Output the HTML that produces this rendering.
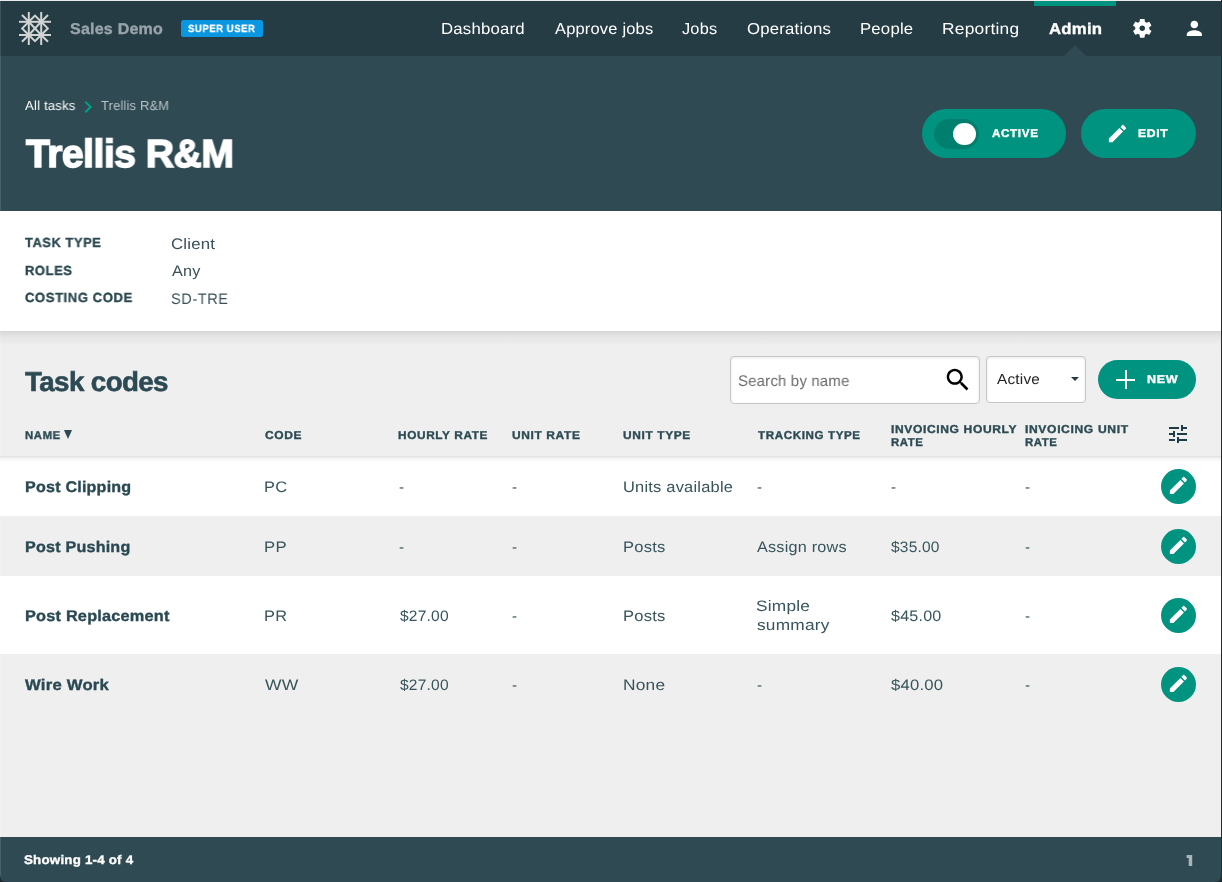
<!DOCTYPE html>
<html><head><meta charset="utf-8">
<style>
html,body{margin:0;padding:0;}
body{width:1222px;height:882px;position:relative;overflow:hidden;background:#1b2a2f;font-family:"Liberation Sans",sans-serif;}
.t{position:absolute;white-space:nowrap;line-height:1;z-index:5;text-rendering:geometricPrecision;will-change:transform}
.pill{position:absolute;background:#009380;border-radius:25px;}
.circ{position:absolute;width:35px;height:35px;border-radius:50%;background:#009380;}
.row{position:absolute;left:0;width:1222px;}
svg{z-index:5}
</style></head><body>
<div style="position:absolute;left:0;top:0;width:1222px;height:1px;background:#ebebeb"></div>
<div style="position:absolute;left:0;top:1px;width:1222px;height:55px;background:#253c44"></div>
<div style="position:absolute;left:0;top:56px;width:1222px;height:155px;background:#2f4a53"></div>
<div style="position:absolute;left:0;top:331px;width:1222px;height:506px;background:#efefef"></div>
<div style="position:absolute;left:0;top:211px;width:1222px;height:120px;background:#fff"></div>
<div style="position:absolute;left:0;top:331px;width:1222px;height:15px;background:linear-gradient(rgba(0,0,0,.115),rgba(0,0,0,.075) 2px,rgba(0,0,0,.035) 7px,rgba(0,0,0,0))"></div>
<div class="row" style="top:456px;height:60px;background:#ffffff"></div>
<div class="row" style="top:516px;height:60px;background:#efefef"></div>
<div class="row" style="top:576px;height:78px;background:#ffffff"></div>
<div class="row" style="top:654px;height:60px;background:#efefef"></div>
<div style="position:absolute;left:0;top:456px;width:1222px;height:6px;background:linear-gradient(rgba(0,0,0,.13),rgba(0,0,0,.05) 2px,rgba(0,0,0,0))"></div>
<div style="position:absolute;left:0;top:837px;width:1221px;height:45px;background:#2f4a53;border-radius:0 0 6px 6px"></div>
<div style="position:absolute;left:1221px;top:0;width:1px;height:882px;background:#2a2a2a;z-index:20"></div>
<div style="position:absolute;left:0;top:0;width:1px;height:876px;background:rgba(255,255,255,.12);z-index:20"></div>
<svg style="position:absolute;left:0;top:0;width:70px;height:56px" viewBox="0 0 70 56">
<g stroke="#d2d3d3" stroke-width="2" fill="none" stroke-linecap="butt">
<line x1="28.8" y1="12" x2="28.8" y2="45"/><line x1="41.2" y1="12" x2="41.2" y2="45"/>
<line x1="19" y1="21.8" x2="51" y2="21.8"/><line x1="19" y1="35" x2="51" y2="35"/>
<line x1="22" y1="15" x2="28.8" y2="21.8"/><line x1="48" y1="15" x2="41.2" y2="21.8"/>
<line x1="22" y1="41.8" x2="28.8" y2="35"/><line x1="48" y1="41.8" x2="41.2" y2="35"/>
<polyline points="28.8,21.8 35,15.6 41.2,21.8"/>
<polyline points="28.8,35 35,41.2 41.2,35"/>
<polyline points="28.8,21.8 22.2,28.4 28.8,35"/>
<polyline points="41.2,21.8 47.8,28.4 41.2,35"/>
<line x1="28.8" y1="21.8" x2="41.2" y2="35"/><line x1="41.2" y1="21.8" x2="28.8" y2="35"/>
</g></svg>
<svg style="position:absolute;left:0;top:0;width:1222px;height:882px;z-index:6" viewBox="0 0 1222 882"><path fill="#a9b5b8" d="M1186.6 854.9h5.6v11.1h-3.5v-8h-2.1z"/></svg>
<div style="position:absolute;left:181.3px;top:20px;width:81.9px;height:17px;background:#0b96e2;border-radius:2.5px"></div>
<div style="position:absolute;left:1034px;top:1px;width:82px;height:5px;background:#009380"></div>
<div style="position:absolute;left:1064px;top:45px;width:0;height:0;border-left:11px solid transparent;border-right:11px solid transparent;border-bottom:11px solid #2f4a53"></div>
<svg style="position:absolute;left:1130.8px;top:17.2px;width:22.5px;height:22.5px" viewBox="0 0 24 24"><path fill="#ffffff" d="M19.43 12.98c.04-.32.07-.64.07-.98s-.03-.66-.07-.98l2.11-1.65c.19-.15.24-.42.12-.64l-2-3.46c-.12-.22-.39-.3-.61-.22l-2.49 1c-.52-.4-1.08-.73-1.69-.98l-.38-2.65C14.46 2.18 14.25 2 14 2h-4c-.25 0-.46.18-.49.42l-.38 2.650c-.61.25-1.17.59-1.69.98l-2.49-1c-.23-.09-.49 0-.61.22l-2 3.46c-.13.22-.07.49.12.64l2.11 1.65c-.04.32-.07.65-.07.98s.03.66.07.98l-2.11 1.65c-.19.15-.24.42-.12.64l2 3.46c.12.22.39.3.61.22l2.49-1c.52.4 1.08.73 1.69.98l.38 2.65c.03.24.24.42.49.42h4c.25 0 .46-.18.49-.42l.38-2.65c.61-.25 1.17-.59 1.69-.98l2.49 1c.23.09.49 0 .61-.22l2-3.46c.12-.22.07-.49-.12-.64l-2.11-1.65zM12 15c-1.66 0-3-1.34-3-3s1.34-3 3-3 3 1.34 3 3-1.34 3-3 3z"/></svg>
<svg style="position:absolute;left:1183.25px;top:17.3px;width:22.7px;height:22.7px" viewBox="0 0 24 24"><path fill="#ffffff" d="M12 12c2.21 0 4-1.79 4-4s-1.79-4-4-4-4 1.79-4 4 1.79 4 4 4zm0 2c-2.67 0-8 1.34-8 4v2h16v-2c0-2.66-5.33-4-8-4z"/></svg>
<svg style="position:absolute;left:76.4px;top:94.5px;width:24px;height:24px" viewBox="0 0 24 24"><path fill="#00a08a" d="M10 6L8.59 7.41 13.17 12l-4.58 4.59L10 18l6-6z"/></svg>
<div class="pill" style="left:922px;top:109px;width:144px;height:49px"></div>
<div style="position:absolute;left:934px;top:119px;width:45px;height:30px;border-radius:15px;background:#007f6e"></div>
<div style="position:absolute;left:953px;top:122.8px;width:22.5px;height:22.5px;border-radius:50%;background:#fff"></div>
<div class="pill" style="left:1081px;top:109px;width:115px;height:49px"></div>
<svg style="position:absolute;left:1106px;top:121.5px;width:23px;height:23px" viewBox="0 0 24 24"><path fill="#ffffff" d="M3 17.25V21h3.75L17.81 9.94l-3.75-3.75L3 17.25zM20.71 7.04c.39-.39.39-1.02 0-1.41l-2.34-2.34c-.39-.39-1.02-.39-1.41 0l-1.83 1.83 3.75 3.75 1.83-1.83z"/></svg>
<div style="position:absolute;left:730px;top:356px;width:248px;height:46px;border:1px solid #c6c6c6;border-radius:4px;background:#fff;box-shadow:inset 0 1px 3px rgba(0,0,0,.09);z-index:3"></div>
<div style="position:absolute;left:986px;top:356px;width:98px;height:45px;border:1px solid #c6c6c6;border-radius:4px;background:#fff;box-shadow:inset 0 1px 3px rgba(0,0,0,.09);z-index:3"></div>
<svg style="position:absolute;left:943.4px;top:365.2px;width:29.76px;height:29.76px;z-index:4" viewBox="0 0 24 24"><path fill="#000" d="M15.5 14h-.79l-.28-.27C15.41 12.59 16 11.110 16 9.5 16 5.91 13.09 3 9.5 3S3 5.91 3 9.5 5.91 16 9.5 16c1.61 0 3.09-.59 4.23-1.57l.27.28v.79l5 4.99L20.49 19l-4.99-5zm-6 0C7.01 14 5 11.99 5 9.5S7.01 5 9.5 5 14 7.01 14 9.5 11.99 14 9.5 14z"/></svg>
<div style="position:absolute;left:1070.6px;top:377px;width:0;height:0;border-left:4.25px solid transparent;border-right:4.25px solid transparent;border-top:4.5px solid #243d45;z-index:4"></div>
<div class="pill" style="left:1098px;top:360px;width:98px;height:39px;border-radius:20px"></div>
<div style="position:absolute;left:1116px;top:378.5px;width:19px;height:2px;background:#fff"></div>
<div style="position:absolute;left:1124.5px;top:370px;width:2px;height:19px;background:#fff"></div>
<div style="position:absolute;left:64.2px;top:429.8px;width:0;height:0;border-left:4.7px solid transparent;border-right:4.7px solid transparent;border-top:9px solid #2c4a53"></div>
<svg style="position:absolute;left:1166px;top:422px;width:24px;height:24px" viewBox="0 0 24 24"><path fill="#1f3d47" d="M3 17v2h6v-2H3zM3 5v2h10V5H3zm10 16v-2h8v-2h-8v-2h-2v6h2zM7 9v2H3v2h4v2h2V9H7zm14 4v-2H11v2h10zm-6-4h2V7h4V5h-4V3h-2v6z"/></svg>
<div class="circ" style="left:1161px;top:469.0px"></div>
<svg style="position:absolute;left:1167.1px;top:474.1px;width:22.8px;height:22.8px" viewBox="0 0 24 24"><path fill="#ffffff" d="M3 17.25V21h3.75L17.81 9.94l-3.75-3.75L3 17.25zM20.71 7.04c.39-.39.39-1.02 0-1.41l-2.34-2.34c-.39-.39-1.02-.39-1.41 0l-1.83 1.83 3.75 3.75 1.83-1.83z"/></svg>
<div class="circ" style="left:1161px;top:529.0px"></div>
<svg style="position:absolute;left:1167.1px;top:534.1px;width:22.8px;height:22.8px" viewBox="0 0 24 24"><path fill="#ffffff" d="M3 17.25V21h3.75L17.81 9.94l-3.75-3.75L3 17.25zM20.71 7.04c.39-.39.39-1.02 0-1.41l-2.34-2.34c-.39-.39-1.02-.39-1.41 0l-1.83 1.83 3.75 3.75 1.83-1.83z"/></svg>
<div class="circ" style="left:1161px;top:598.0px"></div>
<svg style="position:absolute;left:1167.1px;top:603.1px;width:22.8px;height:22.8px" viewBox="0 0 24 24"><path fill="#ffffff" d="M3 17.25V21h3.75L17.81 9.94l-3.75-3.75L3 17.25zM20.71 7.04c.39-.39.39-1.02 0-1.41l-2.34-2.34c-.39-.39-1.02-.39-1.41 0l-1.83 1.83 3.75 3.75 1.83-1.83z"/></svg>
<div class="circ" style="left:1161px;top:667.0px"></div>
<svg style="position:absolute;left:1167.1px;top:672.1px;width:22.8px;height:22.8px" viewBox="0 0 24 24"><path fill="#ffffff" d="M3 17.25V21h3.75L17.81 9.94l-3.75-3.75L3 17.25zM20.71 7.04c.39-.39.39-1.02 0-1.41l-2.34-2.34c-.39-.39-1.02-.39-1.41 0l-1.83 1.83 3.75 3.75 1.83-1.83z"/></svg>
<div class="t" id="sales" style="left:70.01px;top:22.01px;font-size:15.64px;font-weight:700;letter-spacing:0.2px;color:#98a4a9;-webkit-text-stroke:0.35px #98a4a9;transform:scaleX(1.0278);transform-origin:0 0;">Sales Demo</div>
<div class="t" id="badge" style="left:188.39px;top:25.00px;font-size:10.41px;font-weight:700;letter-spacing:0.6px;color:#ffffff;-webkit-text-stroke:0.25px #fff;transform:scaleX(0.9162);transform-origin:0 0;">SUPER USER</div>
<div class="t" id="n1" style="left:440.87px;top:22.00px;font-size:15.83px;font-weight:400;letter-spacing:0.2px;color:#ffffff;transform:scaleX(1.0588);transform-origin:0 0;">Dashboard</div>
<div class="t" id="n2" style="left:555.01px;top:22.00px;font-size:15.83px;font-weight:400;letter-spacing:0.2px;color:#ffffff;transform:scaleX(1.0377);transform-origin:0 0;">Approve jobs</div>
<div class="t" id="n3" style="left:681.76px;top:22.00px;font-size:15.83px;font-weight:400;letter-spacing:0.2px;color:#ffffff;transform:scaleX(1.0301);transform-origin:0 0;">Jobs</div>
<div class="t" id="n4" style="left:746.71px;top:22.00px;font-size:15.83px;font-weight:400;letter-spacing:0.2px;color:#ffffff;transform:scaleX(1.0584);transform-origin:0 0;">Operations</div>
<div class="t" id="n5" style="left:859.55px;top:22.00px;font-size:15.83px;font-weight:400;letter-spacing:0.2px;color:#ffffff;transform:scaleX(1.0564);transform-origin:0 0;">People</div>
<div class="t" id="n6" style="left:941.63px;top:22.00px;font-size:15.83px;font-weight:400;letter-spacing:0.2px;color:#ffffff;transform:scaleX(1.0970);transform-origin:0 0;">Reporting</div>
<div class="t" id="n7" style="left:1048.56px;top:22.01px;font-size:15.68px;font-weight:700;letter-spacing:0.2px;color:#ffffff;-webkit-text-stroke:0.35px #ffffff;transform:scaleX(1.0703);transform-origin:0 0;">Admin</div>
<div class="t" id="bc1" style="left:25.16px;top:98.91px;font-size:13.23px;font-weight:400;letter-spacing:0.2px;color:#ffffff;transform:scaleX(0.9886);transform-origin:0 0;">All tasks</div>
<div class="t" id="bc2" style="left:100.70px;top:98.91px;font-size:13.23px;font-weight:400;letter-spacing:0.2px;color:#b9c3c6;transform:scaleX(0.9745);transform-origin:0 0;">Trellis R&amp;M</div>
<div class="t" id="title" style="left:26.16px;top:135.01px;font-size:39.22px;font-weight:700;letter-spacing:-0.5px;color:#ffffff;-webkit-text-stroke:1.5px #fff;transform:scaleX(0.9964);transform-origin:0 0;">Trellis R&amp;M</div>
<div class="t" id="act" style="left:991.93px;top:128.90px;font-size:11.32px;font-weight:700;letter-spacing:0.6px;color:#ffffff;-webkit-text-stroke:0.35px #ffffff;transform:scaleX(1.0322);transform-origin:0 0;">ACTIVE</div>
<div class="t" id="edit" style="left:1138.06px;top:128.90px;font-size:11.32px;font-weight:700;letter-spacing:0.6px;color:#ffffff;-webkit-text-stroke:0.35px #ffffff;transform:scaleX(1.0765);transform-origin:0 0;">EDIT</div>
<div class="t" id="l1" style="left:25.05px;top:236.40px;font-size:13.19px;font-weight:700;letter-spacing:0.6px;color:#2b4850;-webkit-text-stroke:0.35px #2b4850;transform:scaleX(0.9742);transform-origin:0 0;">TASK TYPE</div>
<div class="t" id="l2" style="left:24.70px;top:264.40px;font-size:13.19px;font-weight:700;letter-spacing:0.6px;color:#2b4850;-webkit-text-stroke:0.35px #2b4850;transform:scaleX(0.9813);transform-origin:0 0;">ROLES</div>
<div class="t" id="l3" style="left:25.47px;top:291.40px;font-size:13.19px;font-weight:700;letter-spacing:0.6px;color:#2b4850;-webkit-text-stroke:0.35px #2b4850;transform:scaleX(0.9882);transform-origin:0 0;">COSTING CODE</div>
<div class="t" id="v1" style="left:171.19px;top:237.00px;font-size:15.25px;font-weight:400;letter-spacing:0.2px;color:#3a5058;transform:scaleX(1.0994);transform-origin:0 0;">Client</div>
<div class="t" id="v2" style="left:171.53px;top:264.00px;font-size:15.25px;font-weight:400;letter-spacing:0.2px;color:#3a5058;transform:scaleX(1.0632);transform-origin:0 0;">Any</div>
<div class="t" id="v3" style="left:170.82px;top:292.00px;font-size:15.25px;font-weight:400;letter-spacing:0.6px;color:#3a5058;transform:scaleX(0.9535);transform-origin:0 0;">SD-TRE</div>
<div class="t" id="tc" style="left:25.35px;top:368.01px;font-size:27.38px;font-weight:700;letter-spacing:-0.6px;color:#2d4a54;-webkit-text-stroke:0.6px #2d4a54;transform:scaleX(1.0130);transform-origin:0 0;">Task codes</div>
<div class="t" id="srch" style="left:737.86px;top:373.61px;font-size:15.44px;font-weight:400;letter-spacing:0.2px;color:#6b6b6b;transform:scaleX(0.9680);transform-origin:0 0;">Search by name</div>
<div class="t" id="sel" style="left:996.53px;top:373.21px;font-size:14.54px;font-weight:400;letter-spacing:0.2px;color:#222222;transform:scaleX(1.0570);transform-origin:0 0;">Active</div>
<div class="t" id="new" style="left:1147.01px;top:374.90px;font-size:11.32px;font-weight:700;letter-spacing:0.6px;color:#ffffff;-webkit-text-stroke:0.35px #ffffff;transform:scaleX(1.1095);transform-origin:0 0;">NEW</div>
<div class="t" id="h1" style="left:24.99px;top:431.00px;font-size:11.4px;font-weight:700;letter-spacing:0.6px;color:#2c4a53;-webkit-text-stroke:0.35px #2c4a53;transform:scaleX(0.9932);transform-origin:0 0;">NAME</div>
<div class="t" id="h2" style="left:265.17px;top:431.00px;font-size:11.4px;font-weight:700;letter-spacing:0.6px;color:#2c4a53;-webkit-text-stroke:0.35px #2c4a53;transform:scaleX(1.0533);transform-origin:0 0;">CODE</div>
<div class="t" id="h3" style="left:398.46px;top:431.00px;font-size:11.4px;font-weight:700;letter-spacing:0.6px;color:#2c4a53;-webkit-text-stroke:0.35px #2c4a53;transform:scaleX(1.0387);transform-origin:0 0;">HOURLY RATE</div>
<div class="t" id="h4" style="left:511.62px;top:431.00px;font-size:11.4px;font-weight:700;letter-spacing:0.6px;color:#2c4a53;-webkit-text-stroke:0.35px #2c4a53;transform:scaleX(1.0488);transform-origin:0 0;">UNIT RATE</div>
<div class="t" id="h5" style="left:623.32px;top:431.00px;font-size:11.4px;font-weight:700;letter-spacing:0.6px;color:#2c4a53;-webkit-text-stroke:0.35px #2c4a53;transform:scaleX(1.0469);transform-origin:0 0;">UNIT TYPE</div>
<div class="t" id="h6" style="left:757.51px;top:431.00px;font-size:11.4px;font-weight:700;letter-spacing:0.6px;color:#2c4a53;-webkit-text-stroke:0.35px #2c4a53;transform:scaleX(1.0186);transform-origin:0 0;">TRACKING TYPE</div>
<div class="t" id="h7" style="left:891.14px;top:425.10px;font-size:11.4px;font-weight:700;letter-spacing:0.6px;color:#2c4a53;-webkit-text-stroke:0.35px #2c4a53;transform:scaleX(1.0572);transform-origin:0 0;">INVOICING HOURLY</div>
<div class="t" id="h7b" style="left:891.00px;top:437.90px;font-size:11.4px;font-weight:700;letter-spacing:0.6px;color:#2c4a53;-webkit-text-stroke:0.35px #2c4a53;">RATE</div>
<div class="t" id="h8" style="left:1025.15px;top:425.10px;font-size:11.4px;font-weight:700;letter-spacing:0.6px;color:#2c4a53;-webkit-text-stroke:0.35px #2c4a53;transform:scaleX(1.0621);transform-origin:0 0;">INVOICING UNIT</div>
<div class="t" id="h8b" style="left:1025.00px;top:437.90px;font-size:11.4px;font-weight:700;letter-spacing:0.6px;color:#2c4a53;-webkit-text-stroke:0.35px #2c4a53;">RATE</div>
<div class="t" id="r0c0" style="left:24.63px;top:480.00px;font-size:15.44px;font-weight:700;letter-spacing:0.2px;color:#2a4952;-webkit-text-stroke:0.35px #2a4952;transform:scaleX(1.0424);transform-origin:0 0;">Post Clipping</div>
<div class="t" id="r0c1" style="left:264.35px;top:480.01px;font-size:15.2px;font-weight:400;letter-spacing:0.2px;color:#38545c;transform:scaleX(1.0806);transform-origin:0 0;">PC</div>
<div class="t" id="r0c2" style="left:398.93px;top:480.01px;font-size:15.2px;font-weight:400;letter-spacing:0.2px;color:#38545c;">-</div>
<div class="t" id="r0c3" style="left:511.93px;top:480.01px;font-size:15.2px;font-weight:400;letter-spacing:0.2px;color:#38545c;">-</div>
<div class="t" id="r0c4" style="left:622.73px;top:480.01px;font-size:15.2px;font-weight:400;letter-spacing:0.2px;color:#38545c;transform:scaleX(1.0825);transform-origin:0 0;">Units available</div>
<div class="t" id="r0c5" style="left:757.09px;top:480.01px;font-size:15.2px;font-weight:400;letter-spacing:0.2px;color:#38545c;">-</div>
<div class="t" id="r0c6" style="left:890.93px;top:480.01px;font-size:15.2px;font-weight:400;letter-spacing:0.2px;color:#38545c;">-</div>
<div class="t" id="r0c7" style="left:1024.80px;top:480.01px;font-size:15.2px;font-weight:400;letter-spacing:0.2px;color:#38545c;">-</div>
<div class="t" id="r1c0" style="left:24.61px;top:540.00px;font-size:15.44px;font-weight:700;letter-spacing:0.2px;color:#2a4952;-webkit-text-stroke:0.35px #2a4952;transform:scaleX(1.0440);transform-origin:0 0;">Post Pushing</div>
<div class="t" id="r1c1" style="left:263.94px;top:540.01px;font-size:15.2px;font-weight:400;letter-spacing:0.2px;color:#38545c;transform:scaleX(1.1021);transform-origin:0 0;">PP</div>
<div class="t" id="r1c2" style="left:399.11px;top:540.01px;font-size:15.2px;font-weight:400;letter-spacing:0.2px;color:#38545c;">-</div>
<div class="t" id="r1c3" style="left:512.11px;top:540.01px;font-size:15.2px;font-weight:400;letter-spacing:0.2px;color:#38545c;">-</div>
<div class="t" id="r1c4" style="left:623.09px;top:540.01px;font-size:15.2px;font-weight:400;letter-spacing:0.2px;color:#38545c;transform:scaleX(1.0913);transform-origin:0 0;">Posts</div>
<div class="t" id="r1c5" style="left:757.12px;top:540.01px;font-size:15.2px;font-weight:400;letter-spacing:0.2px;color:#38545c;transform:scaleX(1.0674);transform-origin:0 0;">Assign rows</div>
<div class="t" id="r1c6" style="left:890.79px;top:540.01px;font-size:15.2px;font-weight:400;letter-spacing:0.2px;color:#38545c;transform:scaleX(1.0220);transform-origin:0 0;">$35.00</div>
<div class="t" id="r1c7" style="left:1024.81px;top:540.01px;font-size:15.2px;font-weight:400;letter-spacing:0.2px;color:#38545c;">-</div>
<div class="t" id="r2c0" style="left:24.50px;top:608.90px;font-size:15.44px;font-weight:700;letter-spacing:0.2px;color:#2a4952;-webkit-text-stroke:0.35px #2a4952;transform:scaleX(1.0553);transform-origin:0 0;">Post Replacement</div>
<div class="t" id="r2c1" style="left:264.15px;top:608.90px;font-size:15.2px;font-weight:400;letter-spacing:0.2px;color:#38545c;transform:scaleX(1.0805);transform-origin:0 0;">PR</div>
<div class="t" id="r2c2" style="left:399.55px;top:608.90px;font-size:15.2px;font-weight:400;letter-spacing:0.2px;color:#38545c;transform:scaleX(1.0250);transform-origin:0 0;">$27.00</div>
<div class="t" id="r2c3" style="left:511.93px;top:608.90px;font-size:15.2px;font-weight:400;letter-spacing:0.2px;color:#38545c;">-</div>
<div class="t" id="r2c4" style="left:623.14px;top:608.90px;font-size:15.2px;font-weight:400;letter-spacing:0.2px;color:#38545c;transform:scaleX(1.0908);transform-origin:0 0;">Posts</div>
<div class="t" id="r2c6" style="left:891.39px;top:608.90px;font-size:15.2px;font-weight:400;letter-spacing:0.2px;color:#38545c;transform:scaleX(1.0589);transform-origin:0 0;">$45.00</div>
<div class="t" id="r2c7" style="left:1024.80px;top:608.90px;font-size:15.2px;font-weight:400;letter-spacing:0.2px;color:#38545c;">-</div>
<div class="t" id="r3c0" style="left:25.45px;top:678.00px;font-size:15.44px;font-weight:700;letter-spacing:0.2px;color:#2a4952;-webkit-text-stroke:0.35px #2a4952;transform:scaleX(1.0812);transform-origin:0 0;">Wire Work</div>
<div class="t" id="r3c1" style="left:265.03px;top:678.01px;font-size:15.2px;font-weight:400;letter-spacing:0.2px;color:#38545c;transform:scaleX(1.1539);transform-origin:0 0;">WW</div>
<div class="t" id="r3c2" style="left:399.55px;top:678.01px;font-size:15.2px;font-weight:400;letter-spacing:0.2px;color:#38545c;transform:scaleX(1.0248);transform-origin:0 0;">$27.00</div>
<div class="t" id="r3c3" style="left:512.11px;top:678.01px;font-size:15.2px;font-weight:400;letter-spacing:0.2px;color:#38545c;">-</div>
<div class="t" id="r3c4" style="left:623.10px;top:678.01px;font-size:15.2px;font-weight:400;letter-spacing:0.2px;color:#38545c;transform:scaleX(1.1414);transform-origin:0 0;">None</div>
<div class="t" id="r3c5" style="left:757.10px;top:678.01px;font-size:15.2px;font-weight:400;letter-spacing:0.2px;color:#38545c;">-</div>
<div class="t" id="r3c6" style="left:891.30px;top:678.01px;font-size:15.2px;font-weight:400;letter-spacing:0.2px;color:#38545c;transform:scaleX(1.0967);transform-origin:0 0;">$40.00</div>
<div class="t" id="r3c7" style="left:1024.81px;top:678.01px;font-size:15.2px;font-weight:400;letter-spacing:0.2px;color:#38545c;">-</div>
<div class="t" id="r2c5a" style="left:756.36px;top:599.01px;font-size:15.14px;font-weight:400;letter-spacing:0.2px;color:#38545c;transform:scaleX(1.1413);transform-origin:0 0;">Simple</div>
<div class="t" id="r2c5b" style="left:756.79px;top:618.01px;font-size:15.14px;font-weight:400;letter-spacing:0.2px;color:#38545c;transform:scaleX(1.1421);transform-origin:0 0;">summary</div>
<div class="t" id="foot" style="left:24.36px;top:854.11px;font-size:12.52px;font-weight:700;letter-spacing:0.2px;color:#ffffff;-webkit-text-stroke:0.35px #ffffff;transform:scaleX(1.0647);transform-origin:0 0;">Showing 1-4 of 4</div>
</body></html>
